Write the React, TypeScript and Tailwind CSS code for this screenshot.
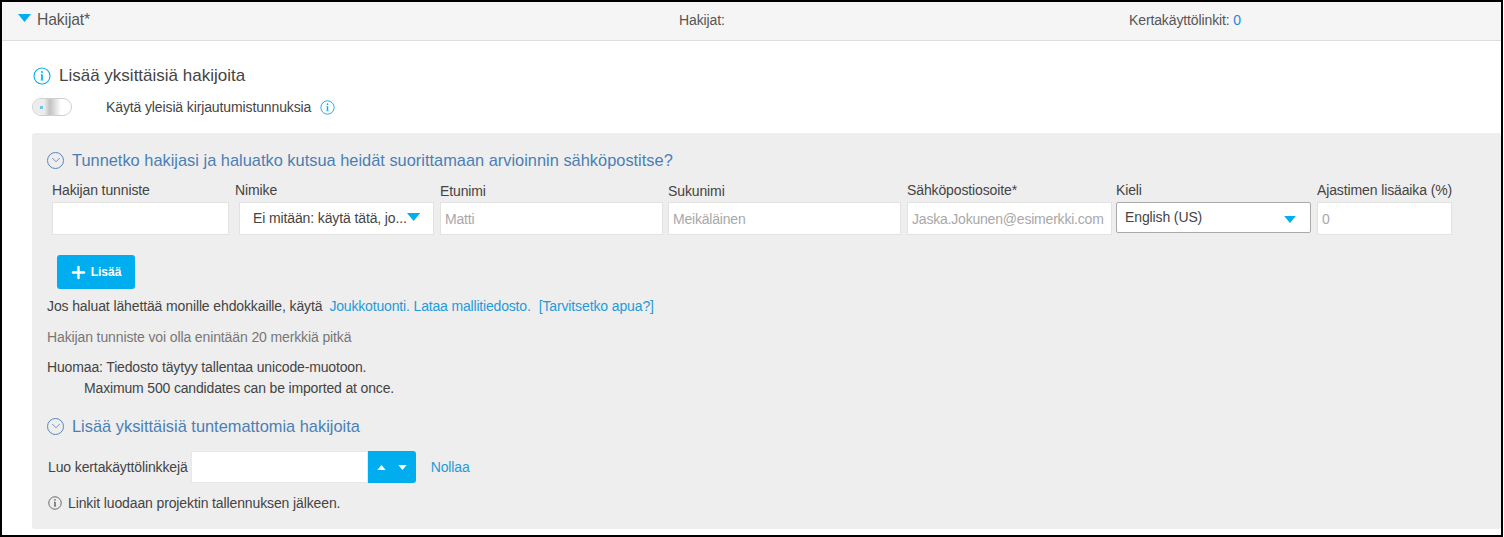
import { ChevronDown, Plus } from "lucide-react";

const BLUE = "#00aeef";

function InfoIcon({ size = 18, color = BLUE }: { size?: number; color?: string }) {
  return (
    <svg width={size} height={size} viewBox="0 0 18 18" fill="none" stroke={color} className="shrink-0">
      <circle cx="9" cy="9" r="8" strokeWidth="1.1" />
      <path d="M9 7.6v5.2" strokeWidth="1.7" />
      <path d="M7.6 13h2.8M7.8 7.7H9" strokeWidth="0.9" />
      <circle cx="9" cy="5" r="1" fill={color} stroke="none" />
    </svg>
  );
}

function Caret({ className = "" }: { className?: string }) {
  return (
    <svg viewBox="0 0 10 6" className={className} fill={BLUE}>
      <path d="M0 0h10L5 6z" />
    </svg>
  );
}

function SectionTitle({ children }: { children: string }) {
  return (
    <div className="flex items-center gap-[8px] text-[16.4px] leading-[20px] text-[#4a7fb5]">
      <span className="flex size-[17px] items-center justify-center rounded-full border border-[#5b86b3]">
        <ChevronDown size={14} strokeWidth={1.5} color="#5b86b3" />
      </span>
      {children}
    </div>
  );
}

function Field({
  label,
  width,
  placeholder,
  labelClass = "",
}: {
  label: string;
  width: string;
  placeholder?: string;
  labelClass?: string;
}) {
  return (
    <div className={`flex flex-col ${width}`}>
      <div className={`h-[20px] text-[14px] leading-[16px] tracking-[-0.12px] whitespace-nowrap text-[#444] ${labelClass}`}>
        {label}
      </div>
      <div className="flex h-[33px] items-center overflow-hidden border border-[#e2e2e2] bg-white px-[4px] pt-[2px] text-[14px] tracking-[-0.2px] whitespace-nowrap text-[#a8a8a8]">
        {placeholder}
      </div>
    </div>
  );
}

export default function App() {
  return (
    <div className="flex h-[537px] w-[1504px] flex-col overflow-hidden bg-white font-['Liberation_Sans',Arial,sans-serif] text-[#444]">
      <div className="mr-[1px] flex h-[537px] flex-col border-2 border-black">
        {/* Header */}
        <div className="flex h-[39px] shrink-0 items-start border-b border-[#dedede] bg-[#f5f5f5] pt-[9px] text-[14px] leading-[18px] tracking-[-0.12px] text-[#555]">
          <div className="flex w-[677px] items-center pl-[16px]">
            <Caret className="mr-[6px] mb-[4px] h-[8px] w-[13px]" />
            <span className="text-[15.7px]">Hakijat*</span>
          </div>
          <div className="w-[450px]">Hakijat:</div>
          <div>
            Kertakäyttölinkit: <span className="text-[#2d88c9]">0</span>
          </div>
        </div>

        {/* Body */}
        <div className="flex min-h-0 flex-1 flex-col pt-[25px] pl-[30px]">
          <div className="flex items-center gap-[8px] pl-[1px] text-[17px] leading-[20px] text-[#444]">
            <InfoIcon />
            Lisää yksittäisiä hakijoita
          </div>
          <div className="mt-[11px] flex h-[20px] items-center">
            <div className="relative h-[18px] w-[40px] overflow-hidden rounded-full border border-[#cfcfcf] bg-white">
              <div className="h-full w-[28px] bg-gradient-to-r from-[#ececec] from-40% via-[#c2c2c2] via-60% to-white" />
              <div className="absolute top-[7px] left-[7px] size-[3px] bg-[#6cc4ea]" />
            </div>
            <span className="ml-[34px] text-[14px] tracking-[-0.12px] text-[#444]">Käytä yleisiä kirjautumistunnuksia</span>
            <span className="ml-[9px]">
              <InfoIcon size={15} />
            </span>
          </div>

          {/* Grey panel */}
          <div className="mt-[16px] flex min-h-0 flex-1 flex-col rounded-[3px] bg-[#eeeeee] pt-[17px] pl-[15px]">
            <SectionTitle>Tunnetko hakijasi ja haluatko kutsua heidät suorittamaan arvioinnin sähköpostitse?</SectionTitle>

            <div className="mt-[12px] flex pl-[5px]">
              <Field label="Hakijan tunniste" width="w-[177px] mr-[10px]" />
              <div className="mr-[6px] flex w-[195px] flex-col">
                <div className="-ml-[4px] h-[20px] text-[14px] leading-[16px] tracking-[-0.12px]">Nimike</div>
                <div className="flex h-[33px] items-center justify-between border border-[#e2e2e2] bg-white pr-[13px] pl-[13px] text-[14px] tracking-[-0.12px] whitespace-nowrap text-[#444]">
                  Ei mitään: käytä tätä, jo...
                  <Caret className="mb-[3px] h-[8px] w-[14px]" />
                </div>
              </div>
              <Field label="Etunimi" labelClass="pt-[1px]" width="w-[223px] mr-[5px]" placeholder="Matti" />
              <Field label="Sukunimi" labelClass="pt-[1px]" width="w-[233px] mr-[6px]" placeholder="Meikäläinen" />
              <Field label="Sähköpostiosoite*" width="w-[205px] mr-[4px]" placeholder="Jaska.Jokunen@esimerkki.com" />
              <div className="mr-[6px] flex w-[195px] flex-col">
                <div className="h-[20px] text-[14px] leading-[16px] tracking-[-0.12px]">Kieli</div>
                <div className="flex h-[31px] items-center justify-between rounded-[2px] border border-[#aaaaaa] bg-white pr-[14px] pl-[8px] text-[14px] tracking-[-0.12px] text-[#444]">
                  English (US)
                  <Caret className="mt-[3px] h-[7px] w-[12px]" />
                </div>
              </div>
              <Field label="Ajastimen lisäaika (%)" width="w-[135px]" placeholder="0" />
            </div>

            <button
              type="button"
              className="mt-[20px] ml-[10px] flex h-[34px] w-[78px] items-center justify-center gap-[3px] rounded-[3px] bg-[#00aeef] pr-[2px] text-[12px] font-bold text-white"
            >
              <Plus size={19} strokeWidth={3} />
              Lisää
            </button>

            <div className="mt-[7px] text-[14px] leading-[20px] tracking-[-0.12px] text-[#444]">
              Jos haluat lähettää monille ehdokkaille, käytä
              <span className="ml-[7px] tracking-[-0.18px] text-[#1f9bd8]">Joukkotuonti.</span>
              <span className="ml-[4px] tracking-[-0.18px] text-[#1f9bd8]">Lataa mallitiedosto.</span>
              <span className="ml-[8px] text-[#1f9bd8]">[Tarvitsetko apua?]</span>
            </div>
            <div className="mt-[11px] text-[14px] leading-[20px] tracking-[-0.12px] text-[#777]">
              Hakijan tunniste voi olla enintään 20 merkkiä pitkä
            </div>
            <div className="mt-[10px] text-[14px] leading-[20px] tracking-[-0.15px] text-[#444]">
              Huomaa: Tiedosto täytyy tallentaa unicode-muotoon.
            </div>
            <div className="mt-[1px] pl-[37px] text-[14px] leading-[20px] tracking-[-0.16px] text-[#444]">
              Maximum 500 candidates can be imported at once.
            </div>

            <div className="mt-[18px]">
              <SectionTitle>Lisää yksittäisiä tuntemattomia hakijoita</SectionTitle>
            </div>

            <div className="mt-[15px] flex items-center pl-[1px]">
              <span className="mr-[3px] pt-[1px] text-[14px] tracking-[-0.12px] text-[#444]">Luo kertakäyttölinkkejä</span>
              <div className="h-[32px] w-[177px] border border-[#e8e8e8] bg-white" />
              <div className="flex h-[32px] w-[48px] items-center justify-around rounded-r-[3px] bg-[#00aeef] px-[3px]">
                <svg viewBox="0 0 10 6" className="h-[5px] w-[9px]" fill="#fff">
                  <path d="M0 6h10L5 0z" />
                </svg>
                <svg viewBox="0 0 10 6" className="h-[5px] w-[9px]" fill="#fff">
                  <path d="M0 0h10L5 6z" />
                </svg>
              </div>
              <span className="ml-[15px] pt-[1px] text-[14px] tracking-[-0.12px] text-[#1f9bd8]">Nollaa</span>
            </div>

            <div className="mt-[10px] flex items-center gap-[6px] pl-[1px] text-[14px] leading-[20px] tracking-[-0.12px] text-[#444]">
              <InfoIcon size={14} color="#555" />
              Linkit luodaan projektin tallennuksen jälkeen.
            </div>
          </div>
          <div className="h-[6px] shrink-0" />
        </div>
      </div>
    </div>
  );
}
